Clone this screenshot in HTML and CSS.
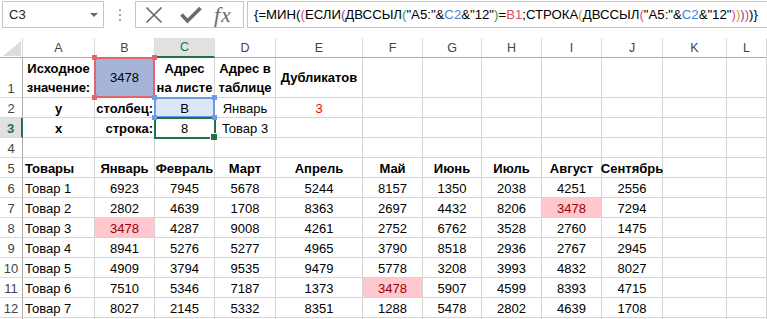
FILE: index.html
```html
<!DOCTYPE html>
<html>
<head>
<meta charset="utf-8">
<link rel="stylesheet" href="styles.css">
</head>
<body>
<div class="fbar">
  <div class="namebox"><span>C3</span><span class="nb-arrow"></span></div>
  <div class="grip"><i></i><i></i><i></i></div>
  <div class="fbtns">
    <svg class="ic-x" width="18" height="18" viewBox="0 0 18 18"><path d="M1.5 1.5L16.5 16.5M16.5 1.5L1.5 16.5" stroke="#6b6b6b" stroke-width="1.7" fill="none"/></svg>
    <svg class="ic-ok" width="22" height="18" viewBox="0 0 22 18"><path d="M1.5 8.5L7.5 15L20.5 2" stroke="#6b6b6b" stroke-width="3.6" fill="none" stroke-linejoin="miter"/></svg>
    <span class="fx">fx</span>
  </div>
  <div class="formula">{=МИН(<span class="k1">(</span>ЕСЛИ<span class="k2">(</span>ДВССЫЛ<span class="k3">(</span>"A5:"&amp;<span class="rb">C2</span>&amp;"12"<span class="k3">)</span>=<span class="rr">B1</span>;СТРОКА<span class="k4">(</span>ДВССЫЛ<span class="k5">(</span>"A5:"&amp;<span class="rb">C2</span>&amp;"12"<span class="k5">)</span><span class="k4">)</span><span class="k2">)</span><span class="k1">)</span>)}</div>
</div>

<div class="sheet">
  <div class="c corner"><svg width="18" height="15" viewBox="0 0 18 15"><polygon points="18,0 18,15 0,15" fill="#dcdcdc"/></svg></div>
  <div class="c h">A</div><div class="c h">B</div><div class="c h act">C</div><div class="c h">D</div><div class="c h">E</div><div class="c h">F</div><div class="c h">G</div><div class="c h">H</div><div class="c h">I</div><div class="c h">J</div><div class="c h">K</div><div class="c h hl">L</div>

  <div class="c r">1</div>
  <div class="c b wrap">Исходное<br>значение:</div>
  <div class="c mid fillb refR">3478</div>
  <div class="c b wrap">Адрес<br>на листе</div>
  <div class="c b wrap">Адрес в<br>таблице</div>
  <div class="c b mid">Дубликатов</div>
  <div class="c"></div><div class="c"></div><div class="c"></div><div class="c"></div><div class="c"></div><div class="c"></div><div class="c"></div>

  <div class="c r">2</div>
  <div class="c b">у</div>
  <div class="c b rt">столбец:</div>
  <div class="c refB">B</div>
  <div class="c">Январь</div>
  <div class="c red">3</div>
  <div class="c"></div><div class="c"></div><div class="c"></div><div class="c"></div><div class="c"></div><div class="c"></div><div class="c"></div>

  <div class="c r ract">3</div>
  <div class="c b">х</div>
  <div class="c b rt">строка:</div>
  <div class="c sel">8</div>
  <div class="c">Товар 3</div>
  <div class="c"></div>
  <div class="c"></div><div class="c"></div><div class="c"></div><div class="c"></div><div class="c"></div><div class="c"></div><div class="c"></div>

  <div class="c r">4</div>
  <div class="c"></div><div class="c"></div><div class="c"></div><div class="c"></div><div class="c"></div><div class="c"></div><div class="c"></div><div class="c"></div><div class="c"></div><div class="c"></div><div class="c"></div><div class="c"></div>

  <div class="c r">5</div>
  <div class="c b lt">Товары</div><div class="c b">Январь</div><div class="c b">Февраль</div><div class="c b">Март</div><div class="c b">Апрель</div><div class="c b">Май</div><div class="c b">Июнь</div><div class="c b">Июль</div><div class="c b">Август</div><div class="c b">Сентябрь</div><div class="c"></div><div class="c"></div>

  <div class="c r">6</div>
  <div class="c lt">Товар 1</div><div class="c">6923</div><div class="c">7945</div><div class="c">5678</div><div class="c">5244</div><div class="c">8157</div><div class="c">1350</div><div class="c">2038</div><div class="c">4251</div><div class="c">2556</div><div class="c"></div><div class="c"></div>

  <div class="c r">7</div>
  <div class="c lt">Товар 2</div><div class="c">2802</div><div class="c">4639</div><div class="c">1708</div><div class="c">8363</div><div class="c">2697</div><div class="c">4432</div><div class="c">8206</div><div class="c dup">3478</div><div class="c">7294</div><div class="c"></div><div class="c"></div>

  <div class="c r">8</div>
  <div class="c lt">Товар 3</div><div class="c dup">3478</div><div class="c">4287</div><div class="c">9008</div><div class="c">4261</div><div class="c">2752</div><div class="c">6762</div><div class="c">3528</div><div class="c">2760</div><div class="c">1475</div><div class="c"></div><div class="c"></div>

  <div class="c r">9</div>
  <div class="c lt">Товар 4</div><div class="c">8941</div><div class="c">5276</div><div class="c">5277</div><div class="c">4965</div><div class="c">3790</div><div class="c">8518</div><div class="c">2936</div><div class="c">2767</div><div class="c">2945</div><div class="c"></div><div class="c"></div>

  <div class="c r">10</div>
  <div class="c lt">Товар 5</div><div class="c">4909</div><div class="c">3794</div><div class="c">9535</div><div class="c">9479</div><div class="c">5778</div><div class="c">3208</div><div class="c">3993</div><div class="c">4832</div><div class="c">8027</div><div class="c"></div><div class="c"></div>

  <div class="c r">11</div>
  <div class="c lt">Товар 6</div><div class="c">7510</div><div class="c">5346</div><div class="c">7187</div><div class="c">1373</div><div class="c dup">3478</div><div class="c">5907</div><div class="c">4599</div><div class="c">8393</div><div class="c">4715</div><div class="c"></div><div class="c"></div>

  <div class="c r">12</div>
  <div class="c lt">Товар 7</div><div class="c">8027</div><div class="c">2145</div><div class="c">5332</div><div class="c">8351</div><div class="c">1288</div><div class="c">5478</div><div class="c">2802</div><div class="c">4639</div><div class="c">1708</div><div class="c"></div><div class="c"></div>

  <div class="c r"></div>
  <div class="c"></div><div class="c"></div><div class="c"></div><div class="c"></div><div class="c"></div><div class="c"></div><div class="c"></div><div class="c"></div><div class="c"></div><div class="c"></div><div class="c"></div><div class="c"></div>
</div>
</body>
</html>
```

FILE: styles.css
```css
* { box-sizing: border-box; }
html, body { margin: 0; padding: 0; }
body {
  width: 767px;
  height: 319px;
  overflow: hidden;
  background: #fff;
  font-family: "Liberation Sans", Arial, sans-serif;
  font-size: 13px;
  color: #000;
}

/* formula bar */
.fbar {
  height: 38px;
  display: flex;
  align-items: flex-start;
  padding-top: 1px;
}
.namebox {
  margin-left: 2px;
  width: 102px;
  height: 27px;
  border: 1px solid #c6c6c6;
  display: flex;
  align-items: center;
  justify-content: space-between;
  padding: 0 5px 0 6px;
  color: #222;
}
.nb-arrow {
  width: 0;
  height: 0;
  border-left: 4px solid transparent;
  border-right: 4px solid transparent;
  border-top: 4px solid #6a6a6a;
}
.grip {
  width: 31px;
  height: 27px;
  display: flex;
  flex-direction: column;
  align-items: center;
  justify-content: center;
  gap: 3px;
}
.grip i { display: block; width: 2px; height: 2px; background: #a8a8a8; }
.fbtns {
  width: 109px;
  height: 27px;
  border: 1px solid #c6c6c6;
  display: flex;
  align-items: center;
  padding-left: 9px;
}
.ic-x { margin-right: 17px; }
.ic-ok { margin-right: 12px; margin-top: 1px; }
.fx {
  font-family: "Liberation Serif", "Times New Roman", serif;
  font-style: italic;
  font-size: 22px;
  color: #6b6b6b;
  letter-spacing: 1px;
  line-height: 22px;
}
.formula {
  margin-left: 3px;
  flex: 1;
  height: 27px;
  border: 1px solid #c6c6c6;
  border-right: none;
  display: flex;
  align-items: center;
  padding-left: 6px;
  white-space: nowrap;
  font-size: 13.2px;
  color: #000;
}
.k1 { color: #e0457b; }
.k2 { color: #8a3fb0; }
.k3 { color: #2e9e62; }
.k4 { color: #c9a12a; }
.k5 { color: #d84c9e; }
.rb { color: #4a7fd8; }
.rr { color: #e0505d; }

/* sheet */
.sheet {
  display: grid;
  grid-template-columns: 23px 72px 60px 60px 61px 87px 60px 59px 60px 60px 61px 64px 1fr;
  grid-template-rows: 20px 40px;
  grid-auto-rows: 20px;
}
.c {
  border-right: 1px solid #d4d4d4;
  border-bottom: 1px solid #d4d4d4;
  display: flex;
  align-items: flex-end;
  justify-content: center;
  text-align: center;
  white-space: nowrap;
  line-height: 16px;
  min-width: 0;
}
.corner {
  border-right-color: #dadada;
  border-bottom-color: #ababab;
  align-items: flex-end;
  justify-content: flex-end;
  padding: 0 1px 1px 0;
}
.corner svg { display: block; }
.h {
  color: #444;
  font-size: 12.5px;
  align-items: center;
  border-right-color: #dadada;
  border-bottom-color: #ababab;
}
.h.act {
  background: #e1e1e1;
  color: #217346;
  border-bottom: 2px solid #217346;
}
.r {
  color: #444;
  border-right-color: #ababab;
  border-bottom-color: #dadada;
}
.r.ract {
  background: #e1e1e1;
  color: #217346;
  font-weight: bold;
  border-right: 2px solid #217346;
}
.b { font-weight: bold; }
.lt { justify-content: flex-start; padding-left: 2px; }
.rt { justify-content: flex-end; padding-right: 1px; }
.wrap { white-space: normal; line-height: 19px; }
.mid { align-items: center; }
.red { color: #ff0000; }
.fillb { background: #a6b5d7; }
.dup { background: #ffc7ce; color: #9c0006; }

/* reference highlight, selection */
.refR, .refB, .sel { position: relative; }
.refR::before, .refB::before {
  content: "";
  position: absolute;
  left: -1px;
  top: -1px;
  right: -1px;
  bottom: -1px;
  border: 2px solid;
  z-index: 2;
}
.refR::after, .refB::after {
  content: "";
  position: absolute;
  left: -3px;
  top: -3px;
  right: -3px;
  bottom: -3px;
  z-index: 4;
}
.refR::before { border-color: #e4636d; }
.refR::after {
  background:
    linear-gradient(#e4636d, #e4636d) 0 0 / 5px 5px no-repeat,
    linear-gradient(#e4636d, #e4636d) 100% 0 / 5px 5px no-repeat,
    linear-gradient(#e4636d, #e4636d) 0 100% / 5px 5px no-repeat,
    linear-gradient(#e4636d, #e4636d) 100% 100% / 5px 5px no-repeat;
}
.refB { background: #dde6f8; }
.refB::before { border-color: #6d9ae6; }
.refB::after {
  background:
    linear-gradient(#6d9ae6, #6d9ae6) 0 0 / 5px 5px no-repeat,
    linear-gradient(#6d9ae6, #6d9ae6) 100% 0 / 5px 5px no-repeat,
    linear-gradient(#6d9ae6, #6d9ae6) 0 100% / 5px 5px no-repeat,
    linear-gradient(#6d9ae6, #6d9ae6) 100% 100% / 5px 5px no-repeat;
}
.sel::before {
  content: "";
  position: absolute;
  left: -1px;
  top: -1px;
  right: -2px;
  bottom: -2px;
  border: 2px solid #217346;
  z-index: 3;
}
.sel::after {
  content: "";
  position: absolute;
  right: -3px;
  bottom: -3px;
  width: 6px;
  height: 6px;
  background: #217346;
  border-top: 1px solid #fff;
  border-left: 1px solid #fff;
  z-index: 5;
}
```
